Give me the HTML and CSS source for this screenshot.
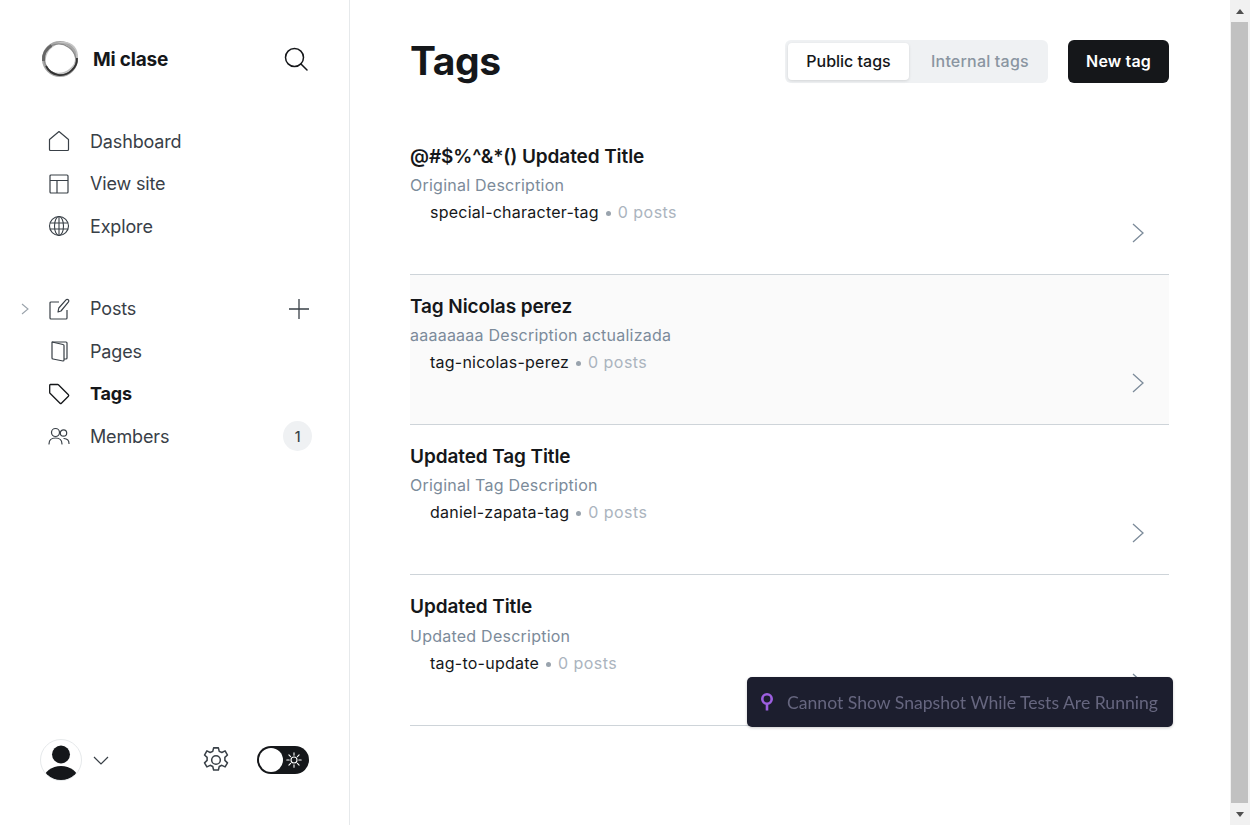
FILE: index.html
```html
<!DOCTYPE html>
<html lang="en">
<head>
    <meta charset="UTF-8">
    <meta name="viewport" content="width=device-width, initial-scale=1.0">
    <title>Tags - Mi clase</title>
    <link rel="stylesheet" href="styles.css">
</head>
<body>

<div class="app">
    <aside class="sidebar">
        <div class="brand">
            <svg class="logo" width="40" height="40" viewBox="0 0 40 40" fill="none">
                <circle cx="20" cy="20" r="16.500" stroke="#a8a8a8" stroke-width="3"/>
                <ellipse cx="21" cy="19" rx="17" ry="14.500" stroke="#c4c4c4" stroke-width="1.500" transform="rotate(-40 21 19)"/>
                <ellipse cx="20" cy="20.500" rx="16.500" ry="15" stroke="#8a8a8a" stroke-width="1.200" transform="rotate(35 20 20.500)"/>
                <path d="M6 27a16 16 0 0 0 26 4 15 15 0 0 0 5-12" stroke="#333" stroke-width="1.800"/>
                <path d="M3.500 22a16.500 16.500 0 0 1 8-15.500" stroke="#666" stroke-width="3"/>
            </svg>
            <span class="brand-name">Mi clase</span>
            <svg class="search" width="24" height="24" viewBox="0 0 24 24" fill="none" stroke="#15171a" stroke-width="1.500" stroke-linecap="round">
                <circle cx="10.500" cy="10.500" r="9"/>
                <path d="M17 17l6 6"/>
            </svg>
        </div>

        <nav class="nav nav-top">
            <a class="nav-item">
                <svg width="22" height="22" viewBox="0 0 22 22" fill="none" stroke="#394047" stroke-width="1.200" stroke-linejoin="round"><path d="M1.500 9.500L11 1.500l9.500 8v10a1 1 0 0 1-1 1h-17a1 1 0 0 1-1-1z"/></svg>
                <span>Dashboard</span>
            </a>
            <a class="nav-item">
                <svg width="22" height="22" viewBox="0 0 22 22" fill="none" stroke="#394047" stroke-width="1.200"><rect x="2" y="2" width="18" height="18" rx="1"/><path d="M2 7.500h18M9 7.500V20"/></svg>
                <span>View site</span>
            </a>
            <a class="nav-item">
                <svg width="22" height="22" viewBox="0 0 22 22" fill="none" stroke="#394047" stroke-width="1.100"><circle cx="11" cy="11" r="9.500"/><ellipse cx="11" cy="11" rx="4.500" ry="9.500"/><path d="M1.800 8h18.400M1.800 14h18.400M11 1.500v19"/></svg>
                <span>Explore</span>
            </a>
        </nav>

        <nav class="nav nav-content">
            <a class="nav-item">
                <svg class="caret" width="8" height="12" viewBox="0 0 8 12" fill="none" stroke="#9aa3ab" stroke-width="1.100"><path d="M1 1l6 5-6 5"/></svg>
                <svg width="22" height="22" viewBox="0 0 22 22" fill="none" stroke="#394047" stroke-width="1.200" stroke-linejoin="round"><path d="M11 4H3a1 1 0 0 0-1 1v15a1 1 0 0 0 1 1h15a1 1 0 0 0 1-1v-8"/><path d="M10 14l.8-4L18 1.800a1.600 1.600 0 0 1 2.300 0 1.600 1.600 0 0 1 0 2.300L13 13z"/></svg>
                <span>Posts</span>
                <svg class="plus" width="22" height="22" viewBox="0 0 22 22" fill="none" stroke="#394047" stroke-width="1.300"><path d="M11 1v20M1 11h20"/></svg>
            </a>
            <a class="nav-item">
                <svg width="22" height="22" viewBox="0 0 22 22" fill="none" stroke="#394047" stroke-width="1.200" stroke-linejoin="round"><path d="M4 2h14a1 1 0 0 1 1 1v15a1 1 0 0 1-1 1h-2"/><path d="M4 2l11 2.500a1 1 0 0 1 1 1V20a1 1 0 0 1-1 1l-10-2a1 1 0 0 1-1-1z"/></svg>
                <span>Pages</span>
            </a>
            <a class="nav-item active">
                <svg width="22" height="22" viewBox="0 0 22 22" fill="none" stroke="#15171a" stroke-width="1.300" stroke-linejoin="round"><path d="M2.500 1.500h7.200a1 1 0 0 1 .7.300l10 10a1 1 0 0 1 0 1.400l-7 7a1 1 0 0 1-1.400 0l-10-10a1 1 0 0 1-.3-.7V2.500a1 1 0 0 1 .8-1z"/></svg>
                <span>Tags</span>
            </a>
            <a class="nav-item">
                <svg width="22" height="22" viewBox="0 0 22 22" fill="none" stroke="#394047" stroke-width="1.200" stroke-linecap="round"><circle cx="7.500" cy="7.500" r="4"/><path d="M1 19c0-4 2.800-6 6.500-6s6.500 2 6.500 6"/><circle cx="15.500" cy="8" r="3.200"/><path d="M16 13.500c3 .2 5 2 5 5"/></svg>
                <span>Members</span>
                <span class="count">1</span>
            </a>
        </nav>

        <div class="sidebar-footer">
            <div class="avatar">
                <svg width="42" height="42" viewBox="0 0 42 42">
                    <defs><clipPath id="avatar-clip"><circle cx="21" cy="21" r="20.500"/></clipPath></defs>
                    <g clip-path="url(#avatar-clip)" fill="#15171a">
                        <circle cx="21" cy="15.500" r="9"/>
                        <ellipse cx="21" cy="40" rx="17" ry="13"/>
                    </g>
                </svg>
            </div>
            <svg class="chevron" width="16" height="9" viewBox="0 0 16 9" fill="none" stroke="#394047" stroke-width="1.200"><path d="M1 1l7 7 7-7"/></svg>
            <svg class="gear" width="26" height="26" viewBox="1 1 24 24" fill="none" stroke="#394047" stroke-width="1.400" stroke-linejoin="round">
                <circle cx="13" cy="13" r="4"/>
                <path d="M10.800 1.800h4.400l.8 3.200 2.400 1.100 3-1.500 2.200 3.800-2.400 2.200v2.800l2.400 2.200-2.200 3.800-3-1.500-2.400 1.100-.8 3.200h-4.400l-.8-3.200-2.400-1.100-3 1.500-2.200-3.800 2.400-2.200v-2.800L2.400 8.400l2.200-3.800 3 1.500L10 5z"/>
            </svg>
            <div class="toggle">
                <span class="knob"></span>
                <svg width="16" height="16" viewBox="0 0 16 16" fill="none" stroke="#fff" stroke-width="1.100" stroke-linecap="round"><circle cx="8" cy="8" r="3"/><path d="M8 .8v2.400M8 12.800v2.400M.8 8h2.400M12.800 8h2.400M2.900 2.900l1.700 1.700M11.400 11.400l1.700 1.700M2.900 13.100l1.700-1.700M11.400 4.600l1.700-1.700"/></svg>
            </div>
        </div>
    </aside>

    <main class="main">
        <header class="page-head">
            <h1>Tags</h1>
            <div class="tabs">
                <button class="tab selected">Public tags</button>
                <button class="tab">Internal tags</button>
            </div>
            <button class="new-tag">New tag</button>
        </header>

        <div class="tag-list">
            <div class="tag-row">
                <div class="tag-info">
                    <h3>@#$%^&amp;*() Updated Title</h3>
                    <p class="desc">Original Description</p>
                    <p class="slug">special-character-tag<span class="dot"></span><span class="posts">0 posts</span></p>
                </div>
                <svg class="arrow" width="12" height="20" viewBox="0 0 12 20" fill="none" stroke="#7c8b9a" stroke-width="1.300"><path d="M1 1l10 9-10 9"/></svg>
            </div>
            <div class="tag-row hover">
                <div class="tag-info">
                    <h3>Tag Nicolas perez</h3>
                    <p class="desc">aaaaaaaa Description actualizada</p>
                    <p class="slug">tag-nicolas-perez<span class="dot"></span><span class="posts">0 posts</span></p>
                </div>
                <svg class="arrow" width="12" height="20" viewBox="0 0 12 20" fill="none" stroke="#7c8b9a" stroke-width="1.300"><path d="M1 1l10 9-10 9"/></svg>
            </div>
            <div class="tag-row">
                <div class="tag-info">
                    <h3>Updated Tag Title</h3>
                    <p class="desc">Original Tag Description</p>
                    <p class="slug">daniel-zapata-tag<span class="dot"></span><span class="posts">0 posts</span></p>
                </div>
                <svg class="arrow" width="12" height="20" viewBox="0 0 12 20" fill="none" stroke="#7c8b9a" stroke-width="1.300"><path d="M1 1l10 9-10 9"/></svg>
            </div>
            <div class="tag-row last">
                <div class="tag-info">
                    <h3>Updated Title</h3>
                    <p class="desc">Updated Description</p>
                    <p class="slug">tag-to-update<span class="dot"></span><span class="posts">0 posts</span></p>
                </div>
                <svg class="arrow" width="12" height="20" viewBox="0 0 12 20" fill="none" stroke="#7c8b9a" stroke-width="1.300"><path d="M1 1l10 9-10 9"/></svg>
            </div>
        </div>
    </main>

    <div class="scrollbar">
        <span class="scroll-btn"><i class="tri up"></i></span>
        <div class="scroll-thumb"></div>
        <span class="scroll-btn"><i class="tri down"></i></span>
    </div>
</div>

<div class="toast">
    <svg width="14" height="18" viewBox="0 0 14 18" fill="none" stroke="#9d5fe0" stroke-width="2.600"><circle cx="7" cy="6" r="4.700"/><path d="M7 11v6.500"/></svg>
    <span>Cannot Show Snapshot While Tests Are Running</span>
</div>

</body>
</html>
```

FILE: styles.css
```css
* {
    box-sizing: border-box;
}
html, body {
    margin: 0;
    height: 100%;
    overflow: hidden;
}
body {
    font-family: Inter, "Liberation Sans", sans-serif;
    background-color: #fff;
    color: #15171a;
}
.app {
    display: flex;
    height: 825px;
}

/* sidebar */
.sidebar {
    width: 350px;
    flex-shrink: 0;
    border-right: 1px solid #e6e9eb;
    padding: 40px 37px 0 40px;
    display: flex;
    flex-direction: column;
}
.brand {
    display: flex;
    align-items: center;
    height: 38px;
}
.brand-name {
    margin-left: 13px;
    font-size: 19px;
    font-weight: 700;
    letter-spacing: -0.2px;
}
.search {
    margin-left: auto;
    margin-right: 4px;
}
.nav {
    display: flex;
    flex-direction: column;
}
.nav-top {
    margin-top: 42px;
}
.nav-content {
    margin-top: 40px;
}
.nav-item {
    position: relative;
    display: flex;
    align-items: center;
    height: 42.500px;
    padding-left: 8px;
    gap: 20px;
    font-size: 18px;
    letter-spacing: -0.15px;
    color: #394047;
}
.nav-item.active {
    font-weight: 700;
    color: #15171a;
}
.caret {
    position: absolute;
    left: -19px;
    top: 15px;
}
.plus {
    margin-left: auto;
    margin-right: 2px;
}
.count {
    margin-left: auto;
    width: 29px;
    height: 30px;
    border-radius: 50%;
    background-color: #eff1f3;
    display: flex;
    align-items: center;
    justify-content: center;
    font-size: 14px;
    font-weight: 500;
    color: #394047;
}
.sidebar-footer {
    margin-top: auto;
    margin-bottom: 44px;
    display: flex;
    align-items: center;
    height: 42px;
}
.avatar {
    width: 42px;
    height: 42px;
    border-radius: 50%;
    border: 1px solid #e6e9eb;
    overflow: hidden;
}
.avatar svg {
    display: block;
    margin: -1px;
}
.chevron {
    margin-left: 11px;
}
.gear {
    margin-left: auto;
}
.toggle {
    margin-left: 28px;
    margin-right: 3px;
    width: 52px;
    height: 28px;
    border-radius: 14px;
    background-color: #15171a;
    display: flex;
    align-items: center;
    justify-content: space-between;
    padding: 0 7px 0 2px;
}
.knob {
    width: 24px;
    height: 24px;
    border-radius: 50%;
    background-color: #fff;
}

/* main column */
.main {
    flex: 1;
    padding: 40px 61px 0 60px;
}
.page-head {
    display: flex;
    align-items: center;
    height: 43px;
}
h1 {
    margin: 0 auto 0 0;
    font-size: 39px;
    font-weight: 700;
    letter-spacing: -0.4px;
    line-height: 41px;
    padding-bottom: 2px;
}
.tabs {
    display: flex;
    height: 43px;
    padding: 3px;
    background-color: #eff1f3;
    border-radius: 6px;
}
.tab {
    border: none;
    background: none;
    font-family: inherit;
    font-size: 16px;
    font-weight: 500;
    letter-spacing: 0.2px;
    color: #8a95a1;
    width: 136px;
    padding: 0 0 2px 22px;
    text-align: left;
    border-radius: 4px;
}
.tab.selected {
    width: 121px;
    padding: 0 0 2px;
    text-align: center;
    letter-spacing: 0;
    background-color: #fff;
    color: #15171a;
    box-shadow: 0 1px 3px rgba(0, 0, 0, 0.12);
}
.new-tag {
    margin-left: 20px;
    width: 101px;
    height: 43px;
    padding: 0 0 2px;
    border: none;
    border-radius: 6px;
    background-color: #15171a;
    color: #fff;
    font-family: inherit;
    font-size: 16px;
    font-weight: 600;
    letter-spacing: 0.15px;
}

/* tag rows */
.tag-list {
    margin-top: 42px;
}
.tag-row {
    height: 150px;
    border-bottom: 1px solid #ced4d9;
    display: flex;
    justify-content: space-between;
    padding: 20px 25px 0 0;
}
.tag-row.hover {
    background-color: #fafafa;
}
.tag-row.last {
    height: 151px;
}
.tag-row.last .desc {
    margin-top: 8px;
}
h3 {
    margin: 0;
    font-size: 19px;
    font-weight: 600;
    letter-spacing: -0.1px;
    line-height: 23px;
}
.desc {
    margin: 7px 0 0;
    font-size: 16px;
    letter-spacing: 0.24px;
    line-height: 20px;
    color: #7c8b9a;
}
.slug {
    margin: 7px 0 0 20px;
    font-size: 16px;
    letter-spacing: 0.24px;
    line-height: 20px;
    color: #15171a;
}
.dot {
    display: inline-block;
    width: 5px;
    height: 5px;
    margin: 0 7px;
    border-radius: 50%;
    background-color: #99a3ad;
    vertical-align: 2px;
}
.posts {
    letter-spacing: 0.45px;
    color: #abb4be;
}
.arrow {
    margin-top: 78px;
}

/* fake window scrollbar */
.scrollbar {
    width: 20px;
    flex-shrink: 0;
    background-color: #f1f1f1;
    display: flex;
    flex-direction: column;
}
.scroll-btn {
    height: 22px;
    flex-shrink: 0;
    display: flex;
    align-items: center;
    justify-content: center;
}
.scroll-thumb {
    flex: 1;
    margin: 0 2px 0 1px;
    background-color: #c1c1c1;
}
.tri {
    width: 0;
    height: 0;
    border-left: 4.500px solid transparent;
    border-right: 4.500px solid transparent;
}
.tri.up {
    border-bottom: 5px solid #505050;
}
.tri.down {
    border-top: 5px solid #505050;
}

/* overlay toast */
.toast {
    position: fixed;
    left: 747px;
    top: 677px;
    width: 426px;
    height: 50px;
    display: flex;
    align-items: center;
    gap: 13px;
    padding-left: 13px;
    background-color: #1c1e2e;
    border-radius: 5px;
    box-shadow: 0 1px 3px rgba(0, 0, 0, 0.2);
    color: #66667f;
    font-family: Lato, "Liberation Sans", sans-serif;
    font-size: 17.6px;
    white-space: nowrap;
}
```
